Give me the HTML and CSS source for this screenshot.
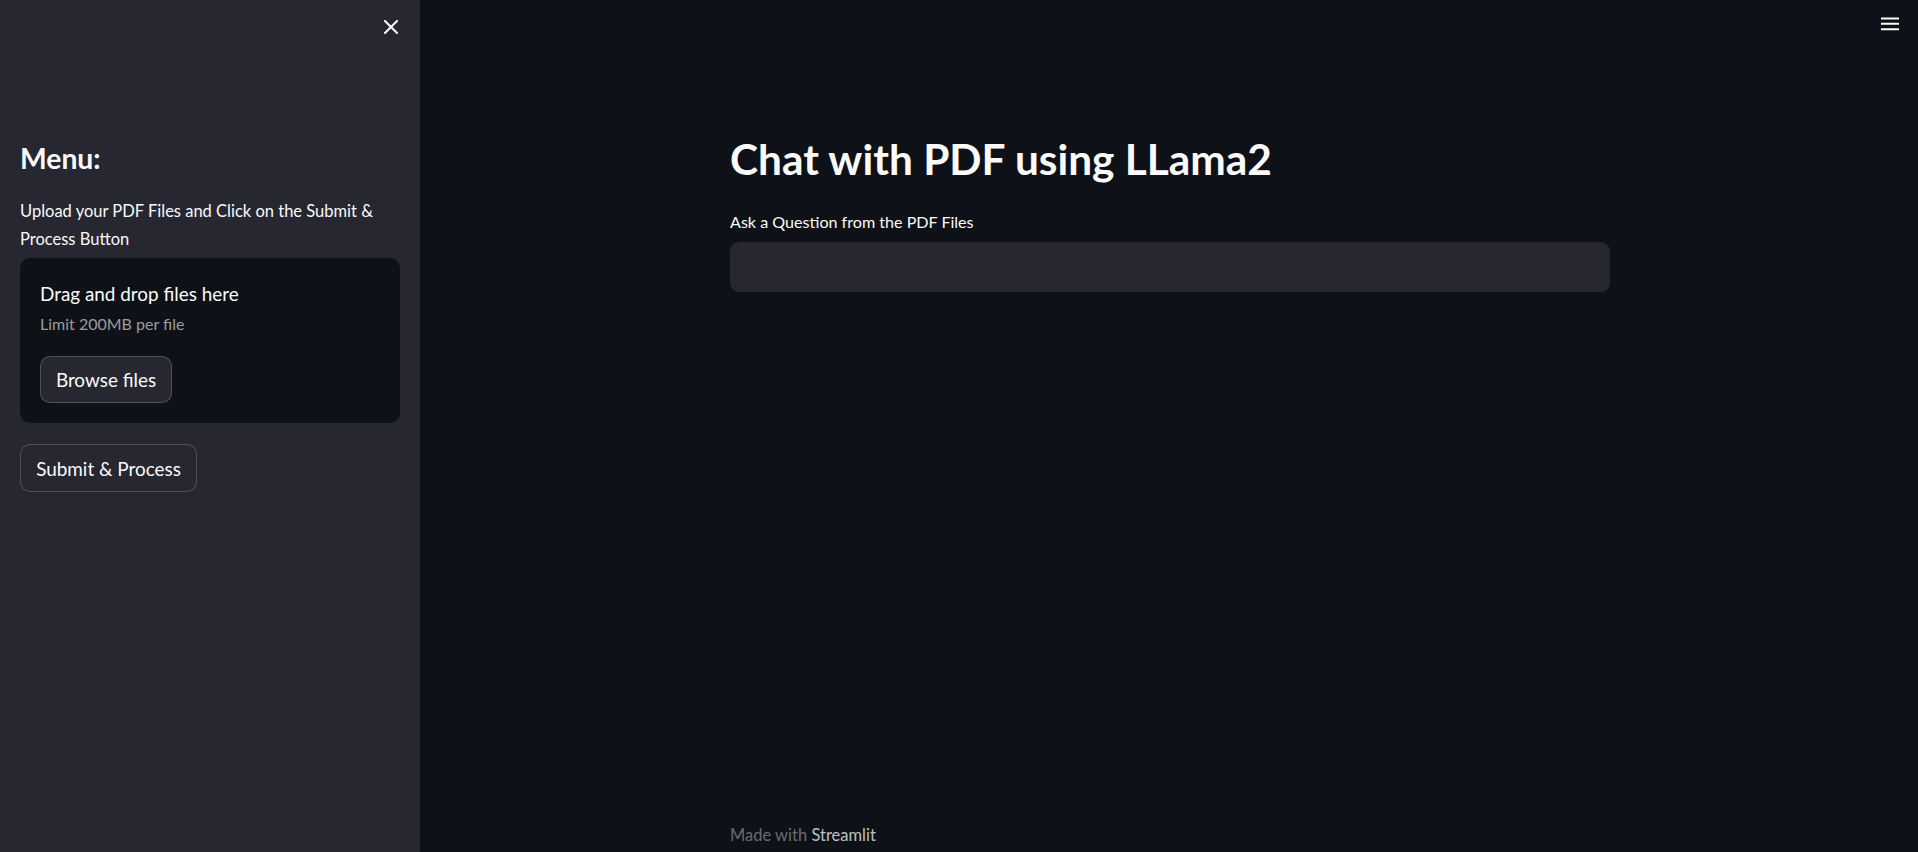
FILE: index.html
```html
<!DOCTYPE html>
<html lang="en">
<head>
<meta charset="utf-8">
<title>Chat with PDF using LLama2</title>
<link rel="stylesheet" href="styles.css">
</head>
<body>
<div class="app">
  <aside class="sidebar">
    <div class="sidebar-header">
      <button class="icon-btn close-btn" aria-label="Close sidebar">
        <svg width="14" height="14" viewBox="0 0 14 14"><path d="M1 1 L13 13 M13 1 L1 13" stroke="#fafafa" stroke-width="2" stroke-linecap="square" fill="none"/></svg>
      </button>
    </div>
    <div class="sidebar-content">
      <h2 class="menu-title">Menu:</h2>
      <p class="sidebar-text">Upload your PDF Files and Click on the Submit &amp; Process Button</p>
      <section class="uploader">
        <div class="drop-title">Drag and drop files here</div>
        <div class="drop-limit">Limit 200MB per file</div>
        <button class="btn browse-btn">Browse files</button>
      </section>
      <button class="btn submit-btn">Submit &amp; Process</button>
    </div>
  </aside>
  <main class="main">
    <header class="topbar">
      <button class="icon-btn menu-btn" aria-label="Main menu">
        <svg width="18" height="14" viewBox="0 0 18 14"><path d="M0 1.5 H18 M0 6.7 H18 M0 12.2 H18" stroke="#fafafa" stroke-width="2" fill="none"/></svg>
      </button>
    </header>
    <div class="block">
      <h1 class="title">Chat with PDF using LLama2</h1>
      <label class="field-label">Ask a Question from the PDF Files</label>
      <div class="text-input"></div>
    </div>
    <footer class="footer">
      <span class="footer-inner">Made with <span class="footer-brand">Streamlit</span></span>
    </footer>
  </main>
</div>
</body>
</html>
```

FILE: styles.css
```css
* { box-sizing: border-box; }
html, body { margin: 0; padding: 0; height: 100%; }
body {
  font-family: "Lato", "Noto Sans", sans-serif;
  color: #fafafa;
  background: #0e1117;
  overflow: hidden;
}
.app {
  display: flex;
  height: 100vh;
}
.icon-btn {
  background: none;
  border: none;
  padding: 0;
  margin: 0;
  display: flex;
  align-items: center;
  justify-content: center;
  cursor: pointer;
}

/* Sidebar */
.sidebar {
  width: 420px;
  flex: 0 0 420px;
  background: #262730;
  display: flex;
  flex-direction: column;
}
.sidebar-header {
  height: 54px;
  display: flex;
  justify-content: flex-end;
  align-items: flex-start;
  padding: 20px 22px 0 0;
}
.close-btn { width: 14px; height: 14px; }
.sidebar-content {
  padding: 0 20px;
  display: flex;
  flex-direction: column;
  align-items: flex-start;
}
.menu-title {
  margin: 86px 0 0 0;
  font-size: 28.3px;
  line-height: 36px;
  font-weight: 700;
}
.sidebar-text {
  margin: 21px 0 0 0;
  font-size: 16.5px;
  line-height: 28px;
  width: 380px;
}
.uploader {
  margin-top: 5px;
  width: 380px;
  height: 165px;
  background: #0e1117;
  border-radius: 10px;
  padding: 24px 20px 20px;
  display: flex;
  flex-direction: column;
  align-items: flex-start;
}
.drop-title {
  font-size: 18.9px;
  line-height: 24px;
}
.drop-limit {
  margin-top: 8px;
  font-size: 16px;
  line-height: 20px;
  color: rgba(250, 250, 250, 0.6);
}
.btn {
  font-family: inherit;
  color: #fafafa;
  background: #262730;
  border: 1px solid rgba(250, 250, 250, 0.2);
  border-radius: 10px;
  font-size: 18.9px;
  display: flex;
  align-items: center;
  justify-content: center;
  padding: 0;
  cursor: pointer;
}
.browse-btn {
  margin-top: 22px;
  width: 132px;
  height: 47px;
}
.submit-btn {
  margin-top: 21px;
  width: 177px;
  height: 48px;
  background: #262730;
}

/* Main */
.main {
  flex: 1;
  display: flex;
  flex-direction: column;
  padding-left: 2px;
}
.topbar {
  height: 54px;
  display: flex;
  justify-content: flex-end;
  padding: 17px 19px 0 0;
}
.menu-btn { width: 18px; height: 14px; }
.block {
  width: 880px;
  margin: 0 auto;
  flex: 1;
  display: flex;
  flex-direction: column;
}
.title {
  margin: 79px 0 0 0;
  font-size: 42.4px;
  line-height: 52px;
  font-weight: 700;
}
.field-label {
  margin-top: 27px;
  font-size: 16.1px;
  line-height: 20px;
}
.text-input {
  margin-top: 10px;
  height: 50px;
  background: #262730;
  border-radius: 9px;
}
.footer {
  width: 880px;
  margin: 0 auto;
  padding: 0 0 7px 0;
}
.footer-inner {
  font-size: 16.5px;
  line-height: 20px;
  color: rgba(250, 250, 250, 0.4);
}
.footer-brand { color: rgba(250, 250, 250, 0.75); }
```
